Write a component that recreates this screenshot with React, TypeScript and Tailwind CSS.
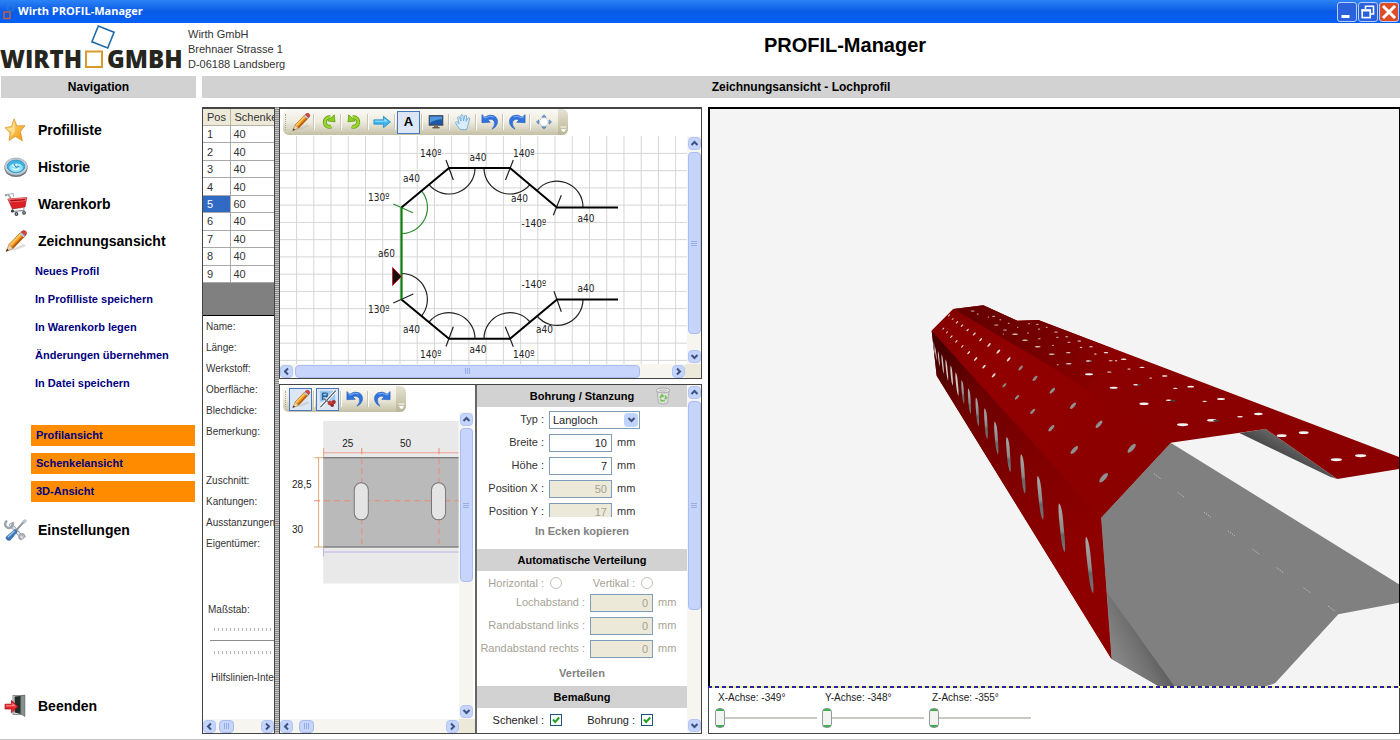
import React, { useState } from "react";

/* ---------- icons ---------- */

function PencilIcon({ className }: { className: string }) {
  return (
    <svg viewBox="0 0 24 24" className={className} aria-hidden="true">
      <path d="M4 22 L12 21 L22 17 L20 15 Z" fill="#bbb" opacity=".5" />
      <path d="M5 15.5 L16.5 3.5 L20.8 7.2 L9 19.5 Z" fill="#f39a22" />
      <path d="M5 15.5 L16.5 3.5 L18 4.8 L6.5 17 Z" fill="#ffcb62" />
      <path d="M7.8 18.3 L19.4 6 L20.8 7.2 L9 19.5 Z" fill="#b95c0d" />
      <path d="M5 15.5 L9 19.5 L2 22.5 Z" fill="#f1d2a4" stroke="#8a5a26" strokeWidth=".5" />
      <path d="M3.2 19.8 L4.8 21.3 L2 22.5 Z" fill="#222" />
      <path d="M15.3 4.7 L17 3 L21.4 6.8 L19.7 8.4 Z" fill="#b9c3d4" />
      <path d="M17 3 Q19 .6 21.6 2 Q23.8 4 21.4 6.8 Z" fill="#d8433c" stroke="#8f2320" strokeWidth=".5" />
      <path d="M5 15.5 L16.5 3.5 M9 19.5 L20.8 7.2" stroke="#95500f" strokeWidth=".6" />
    </svg>
  );
}

function StarIcon() {
  return (
    <svg viewBox="0 0 24 24" className="size-6" aria-hidden="true">
      <defs>
        <linearGradient id="star" x1="0" y1="0" x2="1" y2="1">
          <stop offset="0" stopColor="#ffe98a" />
          <stop offset="1" stopColor="#f0930f" />
        </linearGradient>
      </defs>
      <path d="M10 .8 L13 8 L21 7.6 L16.4 13.6 L18.4 22.8 L11.4 18.4 L5 22.6 L6.2 15 L1 9.8 L7.6 8.4 Z" fill="url(#star)" stroke="#d98d1a" strokeWidth=".7" strokeLinejoin="round" />
      <path d="M10 3 L11 13.6 L6.4 19.5 L8 14 L3 10.4 L8.6 9.5 Z" fill="#fff3b8" opacity=".6" />
    </svg>
  );
}

function HistoryIcon() {
  return (
    <svg viewBox="0 0 24 24" className="size-6" aria-hidden="true">
      <ellipse cx="12" cy="13.4" rx="11.4" ry="8.6" fill="#6d7680" />
      <ellipse cx="12" cy="11.6" rx="11.4" ry="8.6" fill="#c9d0d6" stroke="#8b949c" strokeWidth=".6" />
      <ellipse cx="12" cy="11.4" rx="8.8" ry="6.4" fill="#3fb4e4" stroke="#1d7fae" strokeWidth=".6" />
      <ellipse cx="12" cy="12.8" rx="6.8" ry="4.2" fill="#8fe2fb" />
      <path d="M8 9.5 L10.5 11.5 L13 9 M13.5 12 L16 9.5 M8 13.5 Q12 16 15.5 13.2" stroke="#e9fbff" strokeWidth="1.2" fill="none" />
      <path d="M10 9 L12 12.4 L15.5 11" stroke="#2273a0" strokeWidth=".9" fill="none" />
    </svg>
  );
}

function CartIcon() {
  return (
    <svg viewBox="0 0 24 24" className="size-6" aria-hidden="true">
      <path d="M.8 4 L4 2.6 L6.8 6" stroke="#8a929b" strokeWidth="1.2" fill="none" />
      <path d="M1 2.6 L9.4 1.6 L9.4 4.6" stroke="#aab1b8" strokeWidth="1" fill="none" />
      <path d="M3.8 7 L22.8 5.6 L21 15 L8.4 17 Z" fill="#dc1f26" stroke="#a40f15" strokeWidth=".6" />
      <path d="M3.8 7 L22.8 5.6 L21.8 9 L6 10.4 Z" fill="#f7696b" />
      <path d="M5.6 8 L21.4 7 L20.8 8.2 L7 9.4 Z" fill="#9d0d12" />
      <path d="M8.4 17 L8.8 19.6 L20 18.4 L19.8 15.4" stroke="#8a929b" strokeWidth="1.1" fill="none" />
      <circle cx="8.4" cy="19" r="1.6" fill="#3d4247" />
      <circle cx="12.4" cy="22" r="1.9" fill="#3d4247" />
      <circle cx="20" cy="20.8" r="1.9" fill="#3d4247" />
      <circle cx="12.4" cy="22" r=".7" fill="#ccd" />
      <circle cx="20" cy="20.8" r=".7" fill="#ccd" />
    </svg>
  );
}

function ToolsIcon() {
  return (
    <svg viewBox="0 0 24 24" className="size-6" aria-hidden="true">
      <path d="M7 7 L18 19.5" stroke="#8e969e" strokeWidth="3.8" strokeLinecap="round" />
      <path d="M7 7 L18 19.5" stroke="#dfe4e8" strokeWidth="2.4" strokeLinecap="round" />
      <path d="M3.2 2.8 A3.8 3.8 0 1 0 8.2 4.2" stroke="#9aa2aa" strokeWidth="2.4" fill="none" />
      <path d="M20.600 19.600 A2.800 2.800 0 1 0 17.600 21.600" stroke="#a3abb2" strokeWidth="2" fill="none" />
      <path d="M20.8 2.6 L12 12.6" stroke="#8c949c" strokeWidth="2" />
      <path d="M18.6 3.2 L21.4 1.6 L22.4 3 L20.4 5.4" fill="#cfd5da" stroke="#8c949c" strokeWidth=".6" />
      <path d="M11 11.4 L13.4 13.6 L6.4 22 Q3.6 23.2 2.2 20.8 Q1.6 19.4 3 18.2 Z" fill="#3f78bd" stroke="#27548c" strokeWidth=".6" />
      <path d="M10.4 13 L4 19.2" stroke="#a9cbee" strokeWidth="1.1" />
    </svg>
  );
}

function ExitIcon() {
  return (
    <svg viewBox="0 0 24 24" className="size-6" aria-hidden="true">
      <rect x="9" y="1.5" width="11" height="19" fill="#d9d9d9" stroke="#777" strokeWidth=".8" />
      <path d="M10.6 2.6 L19 1.8 L19 20.4 L10.6 18.6 Z" fill="#1f2c27" />
      <path d="M16.6 2 L21 1 L21 22.6 L16.6 20 Z" fill="#86908c" stroke="#59615e" strokeWidth=".5" />
      <path d="M1 10.2 L7.4 10.2 L7.4 6.4 L14 12.6 L7.4 18.8 L7.4 15 L1 15 Z" fill="#e3262b" stroke="#99090d" strokeWidth=".7" />
      <path d="M1.8 11.2 L8.4 11.2 L8.4 9 L12 12.2 L1.8 12.4 Z" fill="#ff8d88" />
    </svg>
  );
}

function RotateIcon({ mirrored = false }: { mirrored?: boolean }) {
  return (
    <svg viewBox="0 0 20 20" className="size-[18px]" aria-hidden="true">
      <g transform={mirrored ? "matrix(-1 0 0 1 20 0)" : undefined}>
        <path d="M12.4 4.8 A5.3 5.3 0 1 0 13.6 15" fill="none" stroke="#5e9a10" strokeWidth="4.4" />
        <path d="M9.6 8.8 L17.8 9.9 L17 2 Z" fill="#8ccb22" stroke="#5e9a10" strokeWidth=".8" />
        <path d="M12.4 4.8 A5.3 5.3 0 1 0 13.6 15" fill="none" stroke="#97d42c" strokeWidth="3" />
      </g>
    </svg>
  );
}

function ArrowRightIcon() {
  return (
    <svg viewBox="0 0 20 20" className="size-[18px]" aria-hidden="true">
      <path d="M1 7.6 L11.6 7.6 L11.6 3.6 L19.4 10 L11.6 16.4 L11.6 12.4 L1 12.4 Z" fill="#3db7ee" stroke="#1c84bd" strokeWidth=".8" />
      <path d="M2 8.6 L12.6 8.6 L12.6 6 L16.6 9.4 L2 9.6 Z" fill="#a6e2fb" />
    </svg>
  );
}

function MonitorIcon() {
  return (
    <svg viewBox="0 0 20 20" className="size-[18px]" aria-hidden="true">
      <rect x="2.5" y="3" width="15" height="10.5" fill="#1c58a5" stroke="#3a4553" strokeWidth="1.2" />
      <path d="M3.4 4 H16.6 V7 Q9 7 3.4 11 Z" fill="#4f97de" />
      <path d="M8 14 H12 L12.6 16 H7.4 Z" fill="#8a6b54" />
      <path d="M6 16.4 H14" stroke="#55483f" strokeWidth="1.4" />
    </svg>
  );
}

function HandIcon() {
  return (
    <svg viewBox="0 0 20 20" className="size-[18px]" aria-hidden="true">
      <path d="M6.8 18.2 Q3 14 1.6 10.4 Q2.4 9 4 10.2 L5.6 12 L4 5 Q4.8 3.4 6 4.6 L7.8 9 L7.6 2.6 Q8.8 1 9.8 2.6 L10.6 8.8 L12 2.8 Q13.4 1.8 14 3.4 L13.4 9.4 L15.8 5.4 Q17.2 4.8 17.4 6.4 L15.8 12.6 Q15 16.4 13.6 18.6 Z" fill="#d8ecfb" stroke="#6fa9d8" strokeWidth="1" strokeLinejoin="round" />
    </svg>
  );
}

function UndoIcon({ mirrored = false }: { mirrored?: boolean }) {
  return (
    <svg viewBox="0 0 20 20" className="size-[18px]" aria-hidden="true">
      <g transform={mirrored ? "matrix(-1 0 0 1 20 0)" : undefined}>
        <path d="M1 1.8 L4.2 4.6 Q9.6 .8 14.8 3.2 Q19.8 6.2 17.8 12.4 Q16.4 16.4 12.2 18 Q16 13.6 14.8 9.6 Q12.6 5.6 7.6 7.6 L10.4 10.4 L1 10.8 Z" fill="#2f74de" stroke="#1e55b4" strokeWidth=".6" />
        <path d="M2 3.6 L4.2 5.6 Q10 2.2 14 4.4" stroke="#8ab6f7" strokeWidth="1" fill="none" />
      </g>
    </svg>
  );
}

function MoveIcon() {
  return (
    <svg viewBox="0 0 20 20" className="size-[18px]" aria-hidden="true">
      <circle cx="10" cy="10" r="4.8" fill="#fff" stroke="#aab4be" strokeWidth="1" strokeDasharray="2 1.4" />
      <path d="M10 2 L12.4 4.6 H7.600 Z M10 18 L7.600 15.4 H12.4 Z M1.6 10 L4.2 7.600 V12.4 Z M18.400 10 L15.8 12.4 V7.600 Z" fill="#6ea5dd" stroke="#3a6ea8" strokeWidth=".6" />
    </svg>
  );
}

function HoleToolIcon() {
  return (
    <svg viewBox="0 0 20 20" className="size-[18px]" aria-hidden="true">
      <rect x="1" y="1" width="17" height="12" fill="#9cc7ee" />
      <path d="M4 3 V11 M4 3.5 H8 M4 7 H8.6 M9 3 V8" stroke="#2b5e93" strokeWidth="1.6" />
      <path d="M18.6 .8 L1.6 19" stroke="#fff" strokeWidth="3.4" />
      <path d="M18.6 .8 L1.6 19" stroke="#47525e" strokeWidth="1.3" />
      <path d="M5 9.4 L16 17" stroke="#68717b" strokeWidth="1.4" />
      <circle cx="12" cy="14.4" r="2.5" fill="#c33a3a" />
      <circle cx="16.4" cy="13.4" r="2.3" fill="#a92b2b" />
      <circle cx="14.6" cy="17" r="2" fill="#8d2424" />
    </svg>
  );
}

function BinIcon() {
  return (
    <svg viewBox="0 0 16 18" className="h-[18px] w-4" aria-hidden="true">
      <path d="M2 3.6 L3.4 16 Q8 18.4 12.6 16 L14 3.6 Z" fill="#dcdedc" stroke="#a6a8a6" strokeWidth=".8" />
      <ellipse cx="8" cy="3.4" rx="6.600" ry="2.4" fill="#f7f7f7" stroke="#9c9e9c" strokeWidth=".9" />
      <ellipse cx="8" cy="3.6" rx="4.8" ry="1.3" fill="#c6c8c6" />
      <path d="M5 11 L7 8 L8.6 9.6 M10 8.6 L11.4 11 L9.6 12 M9.8 13.8 H6.2 L5.600 12.2" stroke="#6cc24e" strokeWidth="1.5" fill="none" />
    </svg>
  );
}

const chevronPaths = {
  up: "M1.5 6 L4.5 3 L7.5 6",
  down: "M1.5 3 L4.5 6 L7.5 3",
  left: "M6 1.5 L3 4.5 L6 7.5",
  right: "M3 1.5 L6 4.5 L3 7.5",
};

function Chevron({ dir }: { dir: keyof typeof chevronPaths }) {
  return (
    <svg viewBox="0 0 9 9" className="size-[9px]" aria-hidden="true">
      <path d={chevronPaths[dir]} fill="none" stroke="#3d527d" strokeWidth="2" />
    </svg>
  );
}

/* ---------- scroll bars ---------- */

function ScrollButton({ dir, label }: { dir: keyof typeof chevronPaths; label: string }) {
  return (
    <button type="button" aria-label={label} className="flex size-[13px] shrink-0 items-center justify-center rounded-sm border border-[#b3c5f5] bg-[#c5d5fd]">
      <Chevron dir={dir} />
    </button>
  );
}

function VScroll({ thumb }: { thumb: string }) {
  return (
    <div className="flex w-[14px] shrink-0 flex-col items-center gap-[2px] bg-[#f6f5f0] py-px">
      <ScrollButton dir="up" label="Nach oben" />
      <div className="flex min-h-0 flex-1 flex-col">
        <div className={`flex w-[13px] flex-col items-center justify-center gap-px rounded-sm border border-[#a9bdf2] bg-[#c7d5fd] ${thumb}`}>
          <span className="h-px w-[6px] bg-[#95aeea]" />
          <span className="h-px w-[6px] bg-[#95aeea]" />
          <span className="h-px w-[6px] bg-[#95aeea]" />
        </div>
      </div>
      <ScrollButton dir="down" label="Nach unten" />
    </div>
  );
}

function HScroll({ thumb, corner = false }: { thumb: string; corner?: boolean }) {
  return (
    <div className="flex h-[14px] shrink-0">
      <div className="flex min-w-0 flex-1 items-center gap-[2px] bg-[#f6f5f0]">
        <ScrollButton dir="left" label="Nach links" />
        <div className="flex min-w-0 flex-1">
          <div className={`flex h-[13px] items-center justify-center gap-px rounded-sm border border-[#a9bdf2] bg-[#c7d5fd] ${thumb}`}>
            <span className="h-[6px] w-px bg-[#95aeea]" />
            <span className="h-[6px] w-px bg-[#95aeea]" />
            <span className="h-[6px] w-px bg-[#95aeea]" />
          </div>
        </div>
        <ScrollButton dir="right" label="Nach rechts" />
      </div>
      {corner && <div className="w-4 shrink-0 bg-[#ece9d8]" />}
    </div>
  );
}

/* ---------- window frame ---------- */

function TitleBar() {
  const btn = "flex size-5 items-center justify-center rounded-[3px] border border-[#b9cdf5]";
  return (
    <div className="flex h-[23px] shrink-0 items-center bg-linear-to-b from-[#2b83f6] via-[#0a5be6] to-[#0560f5] pr-px pl-[3px]">
      <svg viewBox="0 0 14 18" className="h-[18px] w-[14px]" aria-hidden="true">
        <rect x="1" y="9" width="6" height="6.5" fill="none" stroke="#d5632c" strokeWidth="1.3" />
        <rect x="5" y="1.5" width="6" height="6" fill="none" stroke="#2a7bd6" strokeWidth="1" transform="rotate(20 8 4)" />
      </svg>
      <span className="flex-1 pl-px font-['Open_Sans','Noto_Sans',sans-serif] text-[11px] font-bold text-white">Wirth PROFIL-Manager</span>
      <div className="flex gap-px">
        <button type="button" aria-label="Minimieren" className={`${btn} bg-[#2b61dc]`}>
          <svg viewBox="0 0 18 18" className="size-[18px]"><rect x="3.5" y="12" width="8" height="3" fill="#fff" /></svg>
        </button>
        <button type="button" aria-label="Wiederherstellen" className={`${btn} bg-[#2b61dc]`}>
          <svg viewBox="0 0 18 18" className="size-[18px]">
            <path d="M6.5 6 V3.2 H14.5 V11 H12" fill="none" stroke="#fff" strokeWidth="1.6" />
            <rect x="3.2" y="7.2" width="8" height="7.4" fill="none" stroke="#fff" strokeWidth="1.6" />
            <path d="M2.4 7.4 H12" stroke="#fff" strokeWidth="2.2" />
          </svg>
        </button>
        <button type="button" aria-label="Schließen" className={`${btn} bg-[#df4d26]`}>
          <svg viewBox="0 0 18 18" className="size-[18px]"><path d="M3 3 L15 15 M15 3 L3 15" stroke="#fff" strokeWidth="3" /></svg>
        </button>
      </div>
    </div>
  );
}

function Header() {
  return (
    <header className="flex h-[53px] shrink-0">
      <div className="w-[188px] shrink-0">
        <svg viewBox="0 0 188 53" className="h-[53px] w-[188px]" role="img" aria-label="Wirth GmbH">
          <g fontFamily="'Open Sans','Noto Sans',sans-serif" fontWeight="800" fontSize="24" fill="#26261f">
            <text x="0" y="45">WIRTH</text>
            <text x="107" y="45">GMBH</text>
          </g>
          <rect x="86" y="28.500" width="16" height="15.500" fill="none" stroke="#d79a2b" strokeWidth="2" />
          <rect x="94.500" y="5.500" width="17" height="17" fill="none" stroke="#1f6aa6" strokeWidth="1.600" transform="rotate(22 103 14)" />
        </svg>
      </div>
      <address className="w-[102px] shrink-0 pt-1 text-[11px] leading-[15px] whitespace-nowrap text-[#333] not-italic">
        Wirth GmbH
        <br />
        Brehnaer Strasse 1
        <br />
        D-06188 Landsberg
      </address>
      <h1 className="flex-1 pt-[10px] text-center text-[20px] leading-6 font-bold">PROFIL-Manager</h1>
    </header>
  );
}

/* ---------- navigation ---------- */

function NavLink({ icon, children }: { icon: React.ReactNode; children: React.ReactNode }) {
  return (
    <a href="#" className="flex items-center gap-[10px] pl-1 text-[14px] leading-6 font-bold text-black">
      {icon}
      {children}
    </a>
  );
}

function Sidebar() {
  const actions = ["Neues Profil", "In Profilliste speichern", "In Warenkorb legen", "Änderungen übernehmen", "In Datei speichern"];
  const views = ["Profilansicht", "Schenkelansicht", "3D-Ansicht"];
  return (
    <nav className="flex w-[196px] shrink-0 flex-col pb-[21px]">
      <h2 className="ml-px h-[22px] bg-[#d2d2d2] text-center text-[12px] leading-[22px] font-bold">Navigation</h2>
      <div className="mt-5 flex flex-col gap-[13px]">
        <NavLink icon={<StarIcon />}>Profilliste</NavLink>
        <NavLink icon={<HistoryIcon />}>Historie</NavLink>
        <NavLink icon={<CartIcon />}>Warenkorb</NavLink>
        <NavLink icon={<PencilIcon className="size-6" />}>Zeichnungsansicht</NavLink>
      </div>
      <ul className="mt-[10px] flex flex-col gap-3 pl-[35px] text-[11px] leading-4 font-bold text-[#000080]">
        {actions.map((a) => (
          <li key={a}><a href="#">{a}</a></li>
        ))}
      </ul>
      <div className="mt-[34px] flex flex-col gap-[7px] pr-px pl-[31px]">
        {views.map((v) => (
          <button key={v} type="button" className="h-[21px] bg-[#ff8c00] pl-[5px] text-left text-[11px] font-bold text-[#000080]">{v}</button>
        ))}
      </div>
      <div className="mt-4">
        <NavLink icon={<ToolsIcon />}>Einstellungen</NavLink>
      </div>
      <div className="mt-auto">
        <NavLink icon={<ExitIcon />}>Beenden</NavLink>
      </div>
    </nav>
  );
}

/* ---------- leg list ---------- */

const legs = [40, 40, 40, 40, 60, 40, 40, 40, 40];

function LegPanel() {
  const [active, setActive] = useState(4);
  return (
    <section className="flex w-[73px] shrink-0 flex-col overflow-hidden border border-t-2 border-[#444] text-[11px] text-[#333]">
      <table className="h-[174px] w-[100px] shrink-0 table-fixed border-collapse">
        <thead>
          <tr className="h-4 bg-[#ece9d8]">
            <th className="w-[27px] border-r border-b border-[#b5b2a4] pl-1 text-left leading-4 font-normal">Pos</th>
            <th className="border-b border-[#b5b2a4] pl-1 text-left leading-4 font-normal">Schenkel</th>
          </tr>
        </thead>
        <tbody>
          {legs.map((len, i) => (
            <tr key={i} onClick={() => setActive(i)}>
              <td className={i === active ? "border-r border-b border-[#a9a9a9] bg-[#316ac5] pl-1 leading-3 text-white" : "border-r border-b border-[#a9a9a9] pl-1 leading-3"}>{i + 1}</td>
              <td className="border-b border-[#a9a9a9] pl-[3px] leading-3">{len}</td>
            </tr>
          ))}
        </tbody>
      </table>
      <div className="h-[33px] shrink-0 border-b border-black bg-[#808080]" />
      <div className="flex shrink-0 flex-col pl-[3px] text-[10px] leading-[21px] whitespace-nowrap">
        <span>Name:</span>
        <span>Länge:</span>
        <span>Werkstoff:</span>
        <span>Oberfläche:</span>
        <span>Blechdicke:</span>
        <span className="mb-7">Bemerkung:</span>
        <span>Zuschnitt:</span>
        <span>Kantungen:</span>
        <span>Ausstanzungen:</span>
        <span>Eigentümer:</span>
      </div>
      <div className="mt-[46px] flex shrink-0 flex-col pl-[5px] text-[10px] leading-5 whitespace-nowrap">
        <span>Maßstab:</span>
        <div className="mt-2 ml-[6px] h-[3px] bg-[repeating-linear-gradient(to_right,#b5b5b5_0_1px,transparent_1px_4px)]" />
        <div className="mt-[9px] ml-[2px] h-[2px] border-t border-[#8c8c8c]" />
        <div className="mt-[9px] ml-[6px] h-[3px] bg-[repeating-linear-gradient(to_right,#b5b5b5_0_1px,transparent_1px_4px)]" />
        <span className="mt-[14px] pl-[3px]">Hilfslinien-Intervall:</span>
      </div>
      <div className="mt-auto">
        <HScroll thumb="ml-px w-[15px]" />
      </div>
    </section>
  );
}

/* ---------- tool bars ---------- */

function Toolbar({ children }: { children: React.ReactNode }) {
  return (
    <div className="ml-[3px] flex h-[26px] w-fit items-center rounded-md bg-linear-to-b from-[#faf9f4] via-[#eeebdf] to-[#c4c0a5] pl-[2px]">
      <span className="h-4 w-px border-l border-dotted border-[#a8a592]" />
      <div className="flex items-center pl-[3px]">{children}</div>
      <div className="flex h-full w-[10px] items-end justify-center rounded-r-md bg-linear-to-b from-[#e6e3d4] to-[#b9b595] pb-[2px]">
        <svg viewBox="0 0 7 7" className="size-[7px]" aria-hidden="true">
          <path d="M.5 1 H6.5 M1.5 3.500 H5.500 L3.500 6 Z" stroke="#fff" fill="#fff" />
        </svg>
      </div>
    </div>
  );
}

function Tool({ label, pressed = false, last = false, children }: { label: string; pressed?: boolean; last?: boolean; children: React.ReactNode }) {
  return (
    <div className="flex items-center">
      <button
        type="button"
        aria-label={label}
        className={pressed ? "flex h-[23px] w-[23px] items-center justify-center border border-[#4a78bd] bg-[#dde6f4]" : "flex h-[23px] w-[23px] items-center justify-center border border-transparent"}
      >
        {children}
      </button>
      <span className={last ? "w-[3px]" : "mx-[1px] h-4 w-[2px] border-l border-[#c9c6b4] bg-white"} />
    </div>
  );
}

/* ---------- profile drawing ---------- */

const gridV = Array.from({ length: 24 }, (_, i) => 296.6 + i * 17.23);
const gridH = Array.from({ length: 13 }, (_, i) => 153.4 + i * 17.25);

const profileLabels: [string, number, number][] = [
  ["140º", 420, 157], ["a40", 469.5, 160.5], ["140º", 513, 157], ["a40", 403, 182], ["a40", 511, 202],
  ["130º", 368, 201], ["-140º", 521.5, 226.5], ["a40", 577.5, 222], ["a60", 378, 257], ["-140º", 521.5, 288],
  ["a40", 577.5, 291.5], ["130º", 368, 313], ["a40", 403, 333], ["140º", 420, 357.5], ["a40", 469.5, 353],
  ["140º", 513, 357.5], ["a40", 536, 332.5],
];

function ProfileDrawing() {
  return (
    <svg viewBox="280 136 407 228" preserveAspectRatio="xMinYMin slice" className="h-full min-w-0 flex-1" role="img" aria-label="Profil">
      <path d={gridV.map((x) => `M${x} 136V364`).join("") + gridH.map((y) => `M280 ${y}H687`).join("")} stroke="#d6d6d6" strokeWidth="1" />
      <g fill="none" stroke="#222" strokeWidth="1.2">
        <path d="M475 168 A26 26 0 0 1 429 184.600" />
        <path d="M484 168 A26 26 0 0 0 530 184.600" />
        <path d="M537 190.500 A26 26 0 0 1 583 207.500" />
        <path d="M401.500 273.500 A26 26 0 0 1 421.500 316" />
        <path d="M429 322 A26 26 0 0 1 475 338.800" />
        <path d="M484 338.800 A26 26 0 0 1 530 322" />
        <path d="M583 299.500 A26 26 0 0 1 537 316" />
        <path d="M446 160 L453.300 180 M513.300 160 L505.500 180 M561.300 195.300 L553.300 215.300 M393.300 303 L413.300 294 M453.300 326.700 L446 346.500 M505.300 326.700 L513.300 346.700 M554 291.300 L561.300 311.700" />
      </g>
      <path d="M421.500 190.900 A26 26 0 0 1 401.500 233.500 M393.300 204 L413 212.700" fill="none" stroke="#2f8f2f" strokeWidth="1.2" />
      <path d="M401.500 207.500 L449 168 H510 L557 207.500 H618 M401.500 299.500 L449 338.800 H510 L557 299.500 H618" fill="none" stroke="#000" strokeWidth="2" />
      <path d="M401.500 207.500 V299.500" stroke="#0d7d0d" strokeWidth="2.2" />
      <path d="M392.500 267.500 L401.500 276.500 L392.500 285.500 Z" fill="#111" stroke="#d0202c" strokeWidth="1" />
      <g fontFamily="'DejaVu Sans Condensed','DejaVu Sans',sans-serif" fontSize="10" fill="#222">
        {profileLabels.map(([t, x, y]) => (
          <text key={`${x}-${y}`} x={x} y={y}>{t}</text>
        ))}
      </g>
    </svg>
  );
}

function ProfilePanel() {
  return (
    <section className="flex h-[272px] shrink-0 flex-col border border-t-2 border-[#444]">
      <Toolbar>
        <Tool label="Zeichnen"><PencilIcon className="size-5" /></Tool>
        <Tool label="Links drehen"><RotateIcon /></Tool>
        <Tool label="Rechts drehen"><RotateIcon mirrored /></Tool>
        <Tool label="Weiter"><ArrowRightIcon /></Tool>
        <Tool label="Beschriftung" pressed><span className="text-[13px] leading-4 font-bold">A</span></Tool>
        <Tool label="Vollbild"><MonitorIcon /></Tool>
        <Tool label="Verschieben"><HandIcon /></Tool>
        <Tool label="Rückgängig"><UndoIcon /></Tool>
        <Tool label="Wiederholen"><UndoIcon mirrored /></Tool>
        <Tool label="Einpassen" last><MoveIcon /></Tool>
      </Toolbar>
      <div className="mt-px flex min-h-0 flex-1">
        <ProfileDrawing />
        <VScroll thumb="h-[93%]" />
      </div>
      <HScroll thumb="w-[92%]" corner />
    </section>
  );
}

/* ---------- leg drawing ---------- */

function LegDrawing() {
  return (
    <svg viewBox="280 412 179 306" preserveAspectRatio="xMinYMin slice" className="h-full min-w-0 flex-1" role="img" aria-label="Schenkel">
      <rect x="323" y="421" width="135" height="162" fill="#e9e9e9" />
      <rect x="323" y="457" width="135" height="90" fill="#bababa" />
      <path d="M323 457.500 H458 M323 546.500 H458" stroke="#666" />
      <path d="M323 551.500 H458 M323.500 547 V556" stroke="#b9b3e6" fill="none" />
      <path d="M323 452.500 H458" stroke="#f0a090" />
      <path d="M323.500 448 V457 M318.500 457 V547 M314 457.500 H323 M314 546.500 H323" stroke="#e0a878" fill="none" />
      <path d="M361.500 448 V547 M438.500 448 V547" stroke="#ee8a72" strokeDasharray="6 4" />
      <path d="M314 500.500 H458" stroke="#ee8a72" strokeDasharray="6 4" />
      <rect x="354" y="482.500" width="14" height="37" rx="7" fill="#e4e4e4" stroke="#777" />
      <rect x="431" y="482.500" width="14" height="37" rx="7" fill="#e4e4e4" stroke="#777" />
      <g fontFamily="'Liberation Sans',Arial,sans-serif" fontSize="10" fill="#222">
        <text x="342" y="447">25</text>
        <text x="399.500" y="447">50</text>
        <text x="292" y="488">28,5</text>
        <text x="292" y="532.500">30</text>
      </g>
    </svg>
  );
}

/* ---------- hole form ---------- */

function FormHeading({ children, action }: { children: React.ReactNode; action?: React.ReactNode }) {
  return (
    <div className="relative flex h-[22px] shrink-0 items-center justify-center bg-[#d2d2d2]">
      <h3 className="text-[11px] font-bold text-black">{children}</h3>
      {action}
    </div>
  );
}

function NumberRow({ id, label, value, disabled = false, wide = false, dim = false }: { id: string; label: string; value: string; disabled?: boolean; wide?: boolean; dim?: boolean }) {
  return (
    <div className={dim ? "flex h-[23px] shrink-0 items-center gap-[5px] text-[#a5a294]" : "flex h-[23px] shrink-0 items-center gap-[5px] text-[#333]"}>
      <label htmlFor={id} className={wide ? "w-[108px] shrink-0 text-right whitespace-nowrap" : "w-[67px] shrink-0 text-right whitespace-nowrap"}>{label} :</label>
      <input
        id={id}
        type="text"
        defaultValue={value}
        disabled={disabled}
        className="h-[18px] w-[63px] border border-[#7f9db9] bg-white pr-1 text-right text-[#222] disabled:bg-[#ece9d8] disabled:text-[#a5a294]"
      />
      <span>mm</span>
    </div>
  );
}

function Choice({ id, label, type }: { id: string; label: string; type: "radio" | "checkbox" }) {
  const [on, setOn] = useState(true);
  return (
    <div className="flex items-center gap-[6px]">
      <label htmlFor={id} className="w-[67px] text-right">{label} :</label>
      {type === "radio" ? (
        <input id={id} name="verteilung" type="radio" disabled className="size-3 appearance-none rounded-full border border-[#c4c1b4] bg-white" />
      ) : (
        <span className="relative flex size-3">
          <input id={id} type="checkbox" checked={on} onChange={() => setOn(!on)} className="size-3 appearance-none border border-[#1c5180] bg-white" />
          {on && (
            <svg viewBox="0 0 12 12" className="pointer-events-none absolute inset-0 size-3" aria-hidden="true">
              <path d="M3 5.500 L5.200 8 L9.200 3.500" stroke="#21a121" strokeWidth="2" fill="none" />
            </svg>
          )}
        </span>
      )}
    </div>
  );
}

function HoleForm() {
  return (
    <form className="flex w-[226px] shrink-0 border-l-2 border-[#666] text-[11px]">
      <div className="flex min-w-0 flex-1 flex-col overflow-hidden">
        <FormHeading
          action={
            <button type="button" aria-label="Löschen" className="absolute top-[2px] right-4">
              <BinIcon />
            </button>
          }
        >
          Bohrung / Stanzung
        </FormHeading>
        <div className="flex h-[110px] shrink-0 flex-col overflow-hidden pt-px">
          <div className="flex h-[23px] shrink-0 items-center gap-[5px] text-[#333]">
            <label htmlFor="typ" className="w-[67px] shrink-0 text-right">Typ :</label>
            <span className="relative flex h-[18px] w-[91px]">
              <select id="typ" className="h-[18px] w-full appearance-none border border-[#7f9db9] bg-white pl-[3px] text-[#222]">
                <option>Langloch</option>
                <option>Rundloch</option>
              </select>
              <span className="pointer-events-none absolute top-[2px] right-[2px] flex h-[14px] w-[14px] items-center justify-center rounded-sm bg-[#c1d2fb]">
                <Chevron dir="down" />
              </span>
            </span>
          </div>
          <NumberRow id="breite" label="Breite" value="10" />
          <NumberRow id="hoehe" label="Höhe" value="7" />
          <NumberRow id="posx" label="Position X" value="50" disabled />
          <NumberRow id="posy" label="Position Y" value="17" disabled />
        </div>
        <button type="button" className="h-8 shrink-0 pb-1 font-bold text-[#808080]">In Ecken kopieren</button>
        <FormHeading>Automatische Verteilung</FormHeading>
        <div className="flex h-5 shrink-0 items-center gap-[6px] pt-1 text-[#a5a294]">
          <Choice id="horizontal" label="Horizontal" type="radio" />
          <Choice id="vertikal" label="Vertikal" type="radio" />
        </div>
        <NumberRow id="lochabstand" label="Lochabstand" value="0" disabled wide dim />
        <NumberRow id="randlinks" label="Randabstand links" value="0" disabled wide dim />
        <NumberRow id="randrechts" label="Randabstand rechts" value="0" disabled wide dim />
        <button type="button" className="h-[26px] shrink-0 font-bold text-[#808080]">Verteilen</button>
        <FormHeading>Bemaßung</FormHeading>
        <div className="flex h-6 shrink-0 items-center gap-[6px] text-[#222]">
          <Choice id="schenkel" label="Schenkel" type="checkbox" />
          <Choice id="bohrung" label="Bohrung" type="checkbox" />
        </div>
      </div>
      <VScroll thumb="h-[66%]" />
    </form>
  );
}

function LegDetailPanel() {
  return (
    <section className="flex min-h-0 flex-1 border border-[#444]">
      <div className="flex min-w-0 flex-1 flex-col">
        <div className="pt-px">
          <Toolbar>
            <Tool label="Zeichnen" pressed><PencilIcon className="size-5" /></Tool>
            <Tool label="Stanzung löschen" pressed><HoleToolIcon /></Tool>
            <Tool label="Rückgängig"><UndoIcon /></Tool>
            <Tool label="Wiederholen" last><UndoIcon mirrored /></Tool>
          </Toolbar>
        </div>
        <div className="flex min-h-0 flex-1 pr-[2px]">
          <LegDrawing />
          <VScroll thumb="h-[56%]" />
        </div>
        <HScroll thumb="ml-1 w-[15px]" corner />
      </div>
      <HoleForm />
    </section>
  );
}

/* ---------- 3D model ---------- */

/* top x, top y, bottom x, bottom y */
const sideSlots: [number, number, number, number][] = [
  [101, 155, 104, 195], [105, 170, 110, 213], [114, 182, 119, 230], [125, 193, 131, 252], [137, 208, 144, 273],
  [152, 226, 158, 288], [167, 247, 175, 318], [185, 270, 192, 342], [205, 295, 212, 372], [228, 322, 236, 410],
  [254, 354, 262, 448], [284, 394, 294, 494], [320, 440, 331, 547], [363, 492, 375, 612], [413, 557, 429, 690],
  [477, 640, 494, 787], [558, 740, 579, 910],
];

/* centre x, centre y, half length */
const chamferSlots: [number, number, number][] = [
  [147, 76, 4], [158, 87, 4], [171, 97, 5], [186, 107, 5], [203, 120, 5], [223, 132, 6], [242, 149, 6], [267, 165, 7],
  [295, 185, 8], [326, 208, 8], [362, 234, 9], [405, 265, 10], [457, 302, 11], [519, 347, 12], [597, 403, 14], [695, 475, 17],
  [130, 116, 4], [141, 127, 4], [154, 140, 5], [169, 154, 5], [187, 169, 5], [206, 188, 6], [227, 207, 7], [252, 230, 7],
  [281, 256, 8], [313, 286, 8], [351, 322, 9], [398, 364, 10], [454, 415, 12], [523, 480, 15], [611, 563, 18],
];

/* centre x, centre y, half length */
const topSlots: [number, number, number][] = [
  [218, 63, 6], [233, 72, 3], [281, 79, 5], [301, 89, 3], [326, 100, 3], [289, 105, 7], [315, 120, 6], [345, 133, 9],
  [353, 112, 2], [387, 101, 3], [384, 129, 3], [375, 151, 9], [412, 103, 4], [417, 117, 4], [418, 146, 4], [413, 170, 9],
  [440, 112, 3], [468, 126, 6], [472, 142, 4], [459, 166, 3], [455, 193, 9], [500, 140, 5], [507, 157, 5], [505, 188, 7],
  [506, 221, 9], [538, 153, 6], [543, 172, 4], [573, 170, 6], [586, 192, 4], [566, 213, 9], [567, 253, 12], [618, 188, 7],
  [632, 212, 6], [628, 246, 7], [648, 212, 4], [671, 208, 9], [687, 237, 5], [641, 293, 12], [708, 284, 9], [726, 232, 8],
  [752, 264, 4], [732, 341, 14], [806, 331, 9], [794, 258, 9], [826, 295, 7], [872, 290, 10], [848, 404, 17], [935, 391, 14],
  [914, 334, 7], [963, 327, 12], [1020, 380, 9], [1075, 372, 13], [1145, 437, 15], [1211, 428, 15], [1309, 509, 17], [1382, 497, 17],
  [473, 224, 3], [265, 81, 2], [310, 132, 2],
];

/* shadowed ends of slots through which the inner flange shows */
const slotShadows: [number, number, number][] = [[571, 213, 5], [717, 284, 6], [819, 332, 8], [948, 392, 9]];

const weldMarks: [number, number][] = [[762, 551], [833, 607], [913, 667], [985, 723], [1058, 778], [1130, 833], [1211, 893], [1284, 948]];

function Model3D() {
  return (
    <svg viewBox="-570 -543 2067 1734" preserveAspectRatio="xMinYMin slice" className="h-full w-full bg-[#f4f4f4]" role="img" aria-label="3D-Ansicht">
      <defs>
        <linearGradient id="side" gradientUnits="userSpaceOnUse" x1="95" y1="200" x2="600" y2="740">
          <stop offset="0" stopColor="#460000" />
          <stop offset=".22" stopColor="#6c0000" />
          <stop offset=".6" stopColor="#800000" />
          <stop offset="1" stopColor="#8e0000" />
        </linearGradient>
        <linearGradient id="strip" gradientUnits="userSpaceOnUse" x1="200" y1="60" x2="620" y2="260">
          <stop offset="0" stopColor="#640000" />
          <stop offset=".5" stopColor="#740000" />
          <stop offset="1" stopColor="#8b0000" />
        </linearGradient>
        <linearGradient id="chamfer" gradientUnits="userSpaceOnUse" x1="120" y1="80" x2="700" y2="600">
          <stop offset="0" stopColor="#860000" />
          <stop offset=".3" stopColor="#910000" />
          <stop offset="1" stopColor="#8b0000" />
        </linearGradient>
        <linearGradient id="inner" gradientUnits="userSpaceOnUse" x1="640" y1="1080" x2="760" y2="1020">
          <stop offset="0" stopColor="#858585" />
          <stop offset=".55" stopColor="#6f6f6f" />
          <stop offset="1" stopColor="#565656" />
        </linearGradient>
        <linearGradient id="flange" gradientUnits="userSpaceOnUse" x1="1100" y1="520" x2="1150" y2="430">
          <stop offset="0" stopColor="#303030" />
          <stop offset="1" stopColor="#6d6d6d" />
        </linearGradient>
        <linearGradient id="slot" x1="0" y1="0" x2="0" y2="1">
          <stop offset="0" stopColor="#aaa" />
          <stop offset=".55" stopColor="#8d8d8d" />
          <stop offset=".65" stopColor="#666" />
          <stop offset="1" stopColor="#777" />
        </linearGradient>
      </defs>
      <path d="M812 458 L1497 883 V938 L1315 973 L1125 1180 L1090 1191 H780 L634 1106 L603 683 Z" fill="#808080" />
      <path d="M622 908 L825 1191 H780 L634 1106 Z" fill="url(#inner)" />
      <path d="M1018 429 L1097 417 L1312 567 L1290 560 Z" fill="url(#flange)" />
      <path d="M95 122 L160 57 L250 46 L352 92 L415 90 L1497 501 V537 L1312 567 L1097 417 L812 458 L603 683 L634 1106 L303 570 L110 257 Z" fill="#8b0000" />
      <path d="M160 57 L250 46 L352 92 L415 90 L640 176 L560 300 L470 240 Z" fill="url(#strip)" />
      <path d="M95 122 L160 57 L470 240 L812 458 L603 683 L410 480 Z" fill="url(#chamfer)" />
      <path d="M95 122 L255 300 L410 470 L603 683 L634 1106 L303 570 L110 257 Z" fill="url(#side)" />
      {sideSlots.map(([x1, y1, x2, y2], i) => {
        const w = 1.1 + i * 0.3;
        return (
          <path
            key={i}
            d={`M${x1} ${y1} Q${x1 + w * 1.8} ${y1 + 8} ${(x1 + x2) / 2 + w} ${(y1 + y2) / 2} Q${x2 + w * 0.7} ${y2 - 10} ${x2} ${y2} Q${x2 - w * 1.6} ${y2 - 12} ${(x1 + x2) / 2 - w} ${(y1 + y2) / 2} Q${x1 - w * 0.8} ${y1 + 8} ${x1} ${y1} Z`}
            fill={i < 7 ? "#cfcaca" : "url(#slot)"}
          />
        );
      })}
      {chamferSlots.map(([x, y, r], i) => (
        <ellipse key={i} cx={x} cy={y} rx={r} ry={r * 0.38} transform={`rotate(${-48} ${x} ${y})`} fill={(i > 9 && i < 16) || i > 24 ? "#909090" : "#e6dcd6"} />
      ))}
      {topSlots.map(([x, y, r], i) => (
        <ellipse key={i} cx={x} cy={y} rx={r} ry={Math.max(1.6, r * 0.26)} fill={x < 520 ? "#d8cac6" : "#f4f4f4"} />
      ))}
      {slotShadows.map(([x, y, r], i) => (
        <ellipse key={i} cx={x} cy={y} rx={r} ry={r * 0.34} fill="#444" />
      ))}
      {weldMarks.map(([x, y], i) => (
        <path key={i} d={`M${x} ${y} l20 15`} stroke="#d0d0d0" strokeWidth="3" strokeDasharray="3 4" />
      ))}
    </svg>
  );
}

function AxisSlider({ id, axis, value }: { id: string; axis: string; value: number }) {
  const [v, setV] = useState(value);
  return (
    <div className="flex w-[102px] flex-col">
      <label htmlFor={id} className="pl-[3px] text-[10px] leading-4 whitespace-nowrap text-[#222]">{axis}-Achse: {v}°</label>
      <input
        id={id}
        type="range"
        min={value}
        max={360}
        value={v}
        onChange={(e) => setV(Number(e.target.value))}
        className="mt-[2px] h-5 w-full appearance-none bg-transparent [&::-webkit-slider-runnable-track]:h-[2px] [&::-webkit-slider-runnable-track]:bg-[#c8c8c4] [&::-webkit-slider-thumb]:-mt-[9px] [&::-webkit-slider-thumb]:h-5 [&::-webkit-slider-thumb]:w-[10px] [&::-webkit-slider-thumb]:appearance-none [&::-webkit-slider-thumb]:rounded-sm [&::-webkit-slider-thumb]:border [&::-webkit-slider-thumb]:border-[#8e9aa5] [&::-webkit-slider-thumb]:bg-[linear-gradient(to_bottom,#3cb043_0_2px,#f3f3ef_2px_16px,#3cb043_16px)]"
      />
    </div>
  );
}

function ModelPanel() {
  return (
    <section className="ml-[6px] flex min-w-0 flex-1 flex-col">
      <div className="min-h-0 flex-1 overflow-hidden border-t-2 border-r border-l-2 border-black">
        <Model3D />
      </div>
      <div className="h-[2px] shrink-0 bg-[repeating-linear-gradient(to_right,#2222aa_0_4px,#f0f080_4px_7px)]" />
      <div className="flex h-[46px] shrink-0 gap-[5px] border border-t-0 border-[#444] pt-[2px] pl-[6px]">
        <AxisSlider id="ax" axis="X" value={-349} />
        <AxisSlider id="ay" axis="Y" value={-348} />
        <AxisSlider id="az" axis="Z" value={-355} />
      </div>
    </section>
  );
}

export default function App() {
  return (
    <div className="flex h-screen min-h-[700px] flex-col border-b border-[#c4c4c4] bg-white font-['Liberation_Sans',Arial,sans-serif] text-black">
      <TitleBar />
      <Header />
      <div className="flex min-h-0 flex-1">
        <Sidebar />
        <main className="ml-[6px] flex min-w-0 flex-1 flex-col pb-[5px]">
          <h2 className="h-[22px] shrink-0 bg-[#d2d2d2] text-center text-[12px] leading-[22px] font-bold">Zeichnungsansicht - Lochprofil</h2>
          <div className="mt-[9px] flex min-h-0 flex-1">
            <LegPanel />
            <div className="w-1 shrink-0 bg-[repeating-linear-gradient(to_bottom,#8a8a8a_0_1px,#c8c8c8_1px_2px)]" />
            <div className="flex w-[423px] shrink-0 flex-col gap-[5px]">
              <ProfilePanel />
              <LegDetailPanel />
            </div>
            <ModelPanel />
          </div>
        </main>
      </div>
    </div>
  );
}
